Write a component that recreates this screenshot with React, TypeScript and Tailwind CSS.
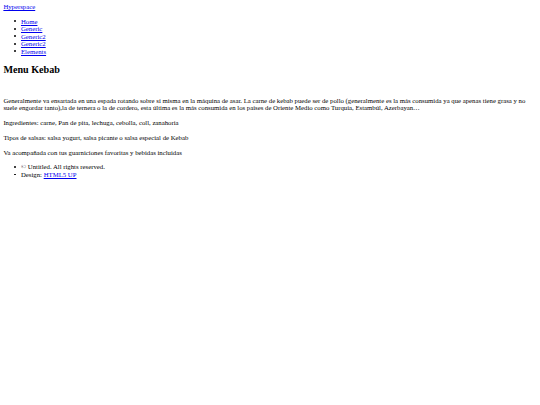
const navLinks = ["Home", "Generic", "Generic2", "Generic2", "Elements"];

const Bullet = () => (
  <span className="w-[1.8px] h-[1.8px] rounded-full bg-black shrink-0" />
);

export default function App() {
  return (
    <div className="bg-white min-h-[405px] p-[3.375px] font-['Liberation_Serif',serif] text-[6.75px] leading-[7.5px] text-black">
      <header>
        <a href="#" className="text-[#0000ee] underline">
          Hyperspace
        </a>
        <nav>
          <ul className="pl-[10.8px] my-[6.75px]">
            {navLinks.map((link, i) => (
              <li key={i} className="flex items-center gap-[5px]">
                <Bullet />
                <a href="#" className="text-[#0000ee] underline">
                  {link}
                </a>
              </li>
            ))}
          </ul>
        </nav>
      </header>

      <section>
        <h2 className="text-[10.125px] leading-[11.6px] font-bold my-[8.4px]">Menu Kebab</h2>
        <div className="h-[6.3px]" />
        <p className="my-[7.2px]">
          Generalmente va ensartada en una espada rotando sobre sí misma en la
          máquina de asar. La carne de kebab puede ser de pollo (generalmente es
          la más consumida ya que apenas tiene grasa y no suele engordar
          tanto),la de ternera o la de cordero, esta última es la más consumida
          en los países de Oriente Medio como Turquía, Estambúl, Azerbayan…
        </p>
        <p className="my-[7.2px]">
          Ingredientes: carne, Pan de pita, lechuga, cebolla, coll, zanahoria
        </p>
        <p className="my-[7.2px]">
          Tipos de salsas: salsa yogurt, salsa picante o salsa especial de Kebab
        </p>
        <p className="my-[7.2px]">
          Va acompañada con tus guarniciones favoritas y bebidas incluidas
        </p>
      </section>

      <footer>
        <ul className="pl-[10.8px] my-[7.2px]">
          <li className="flex items-center gap-[5px]">
            <Bullet />
            <span>© Untitled. All rights reserved.</span>
          </li>
          <li className="flex items-center gap-[5px]">
            <Bullet />
            <span>
              Design:{" "}
              <a href="#" className="text-[#0000ee] underline">
                HTML5 UP
              </a>
            </span>
          </li>
        </ul>
      </footer>
    </div>
  );
}
